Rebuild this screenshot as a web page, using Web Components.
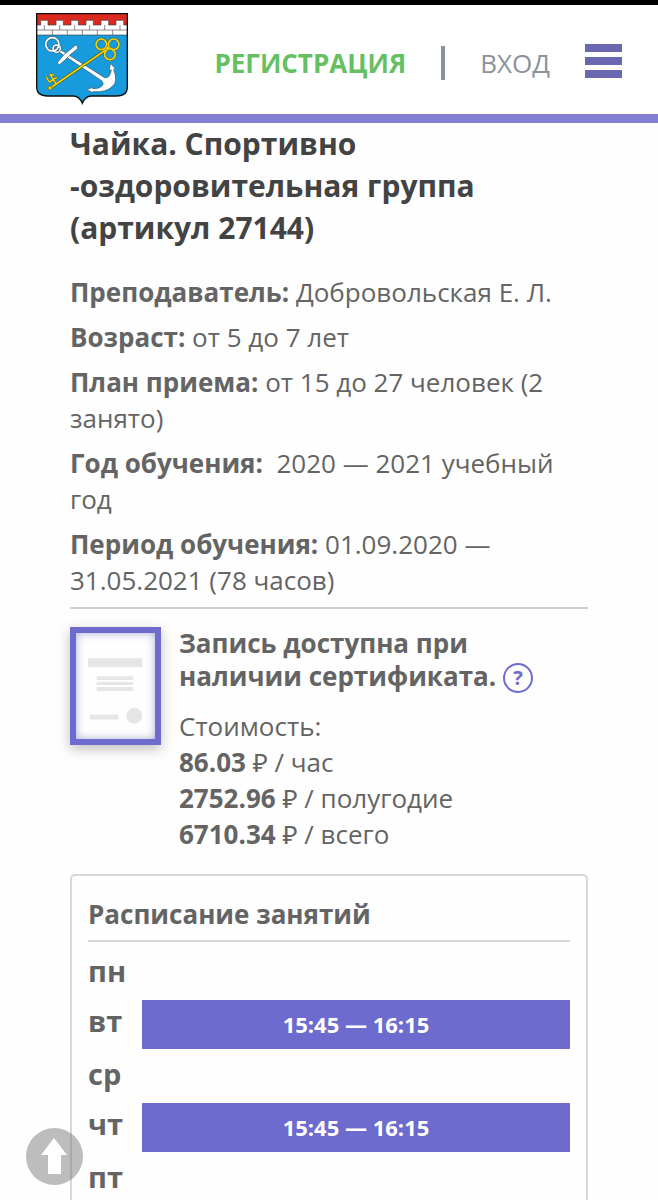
<!DOCTYPE html>
<html lang="ru">
<head>
<meta charset="utf-8">
<meta name="viewport" content="width=device-width, initial-scale=1">
<title>Чайка. Спортивно-оздоровительная группа</title>
<style>
  html, body {
    height: 100%;
    margin: 0;
    overflow: hidden;
  }
  body {
    display: flex;
    flex-direction: column;
    background: #fefefe;
    color: #646464;
    font: 26px/36px "Open Sans", "Noto Sans", sans-serif;
  }
</style>
</head>
<body>
  <site-header></site-header>
  <course-page>
    <span slot="title">Чайка. Спортивно <br>-оздоровительная группа (артикул 27144)</span>
    <course-field label="Преподаватель:">Добровольская Е. Л.</course-field>
    <course-field label="Возраст:">от 5 до 7 лет</course-field>
    <course-field label="План приема:">от 15 до 27 человек (2 занято)</course-field>
    <course-field label="Год обучения:">&nbsp;2020 — 2021 учебный год</course-field>
    <course-field label="Период обучения:">01.09.2020 — 31.05.2021 (78 часов)</course-field>
    <certificate-info slot="certificate">
      <span slot="note">Запись доступна при наличии сертификата.</span>
      <price-line value="86.03">час</price-line>
      <price-line value="2752.96">полугодие</price-line>
      <price-line value="6710.34">всего</price-line>
    </certificate-info>
    <course-schedule slot="schedule" titulo="Расписание занятий" days="пн,вт=15:45 — 16:15,ср,чт=15:45 — 16:15,пт"></course-schedule>
  </course-page>
  <scroll-top></scroll-top>

<script>
class SiteCrest extends HTMLElement {
  constructor() {
    super();
    const shadow = this.attachShadow({mode: "open"});
    shadow.innerHTML = `
      <style>
        :host { display: block; width: 92px; height: 92px; }
        svg { display: block; width: 100%; height: 100%; }
      </style>
      <svg viewBox="108 40 276 276" role="img" aria-label="Герб">
        <defs>
          <clipPath id="shield"><path d="M111 42H382V262Q382 289 350 289H274Q256 289 247 311Q238 289 220 289H143Q111 289 111 262Z"/></clipPath>
        </defs>
        <g clip-path="url(#shield)">
          <path fill="#179bdc" d="M108 40h276v276H108z"/>
          <path fill="#dc291e" d="M108 40h276v40H108z"/>
          <path fill="#fff" stroke="#444" stroke-width="2" d="M108 76H122V62H144V76H168V62H190V76H213V62H235V76H258V62H280V76H303V62H326V76H348V62H371V76H386V106H108Z"/>
          <path fill="none" stroke="#555" stroke-width="2" d="M108 91H386M133 76V91M179 76V91M224 76V91M269 76V91M314 76V91M360 76V91M157 91V106M202 91V106M247 91V106M292 91V106M338 91V106"/>
        </g>
        <g fill="none" stroke="#35576b" stroke-width="8">
          <circle cx="157" cy="134" r="20"/>
          <circle cx="170" cy="147" r="11"/>
        </g>
        <g fill="none" stroke="#fff" stroke-width="5">
          <circle cx="157" cy="134" r="20"/>
          <circle cx="170" cy="147" r="11"/>
        </g>
        <g fill="#fff" stroke="#35576b" stroke-width="2" stroke-linejoin="round">
          <path d="M178 158L183 151L314 234Q329 238 334 211L328 214L331 191L346 207L341 209Q355 247 337 260Q319 279 279 276L281 280L260 270L280 262L278 267Q304 268 310 252L305 243Z"/>
          <path d="M171 190L193 164L214 147L226 137L233 139L232 148L213 163L193 183L178 195Z"/>
        </g>
        <g stroke-linecap="round" fill="none">
          <g stroke="#5c5c20" stroke-width="9">
            <path d="M151 265L324 146"/>
            <path stroke-width="7" d="M168 252L150 224M150 224L160 226M159 239L170 234M142 239L150 247L159 239M142 239L140 232"/>
          </g>
          <g stroke="#5c5c20" stroke-width="8">
            <circle cx="304" cy="134" r="16"/><circle cx="341" cy="134" r="16"/><circle cx="330" cy="164" r="16"/>
          </g>
          <g stroke="#f2d60c" stroke-width="5">
            <path d="M151 265L324 146"/>
            <path stroke-width="4" d="M168 252L150 224M150 224L160 226M159 239L170 234M142 239L150 247L159 239M142 239L140 232"/>
            <circle cx="304" cy="134" r="16"/><circle cx="341" cy="134" r="16"/><circle cx="330" cy="164" r="16"/>
          </g>
        </g>
        <circle cx="323" cy="146" r="6" fill="#f2d60c" stroke="#5c5c20"/>
        <circle cx="150" cy="265" r="6" fill="#f2d60c" stroke="#5c5c20" stroke-width="2"/>
        <path fill="none" stroke="#111" stroke-width="4" d="M110 42H382V262Q382 289 350 289H274Q256 289 247 311Q238 289 220 289H143Q110 289 110 262Z"/>
      </svg>
    `;
  }
}
customElements.define("site-crest", SiteCrest);

class SiteHeader extends HTMLElement {
  constructor() {
    super();
    const shadow = this.attachShadow({mode: "open"});
    shadow.innerHTML = `
      <style>
        :host {
          display: block;
          flex: none;
          border-top: 5px solid #000;
          border-bottom: 9px solid #8380d3;
          background: #fff;
        }
        header {
          display: flex;
          align-items: center;
          justify-content: space-between;
          padding: 8px 36px 9px;
        }
        nav, .links {
          display: flex;
          align-items: center;
          gap: 35px;
          padding-top: 4px;
        }
        a { color: #8b929c; text-decoration: none; }
        .register { color: #66bf62; font-weight: 700; }
        .line { width: 4px; height: 34px; background: #8b929c; }
        button {
          display: flex;
          flex-direction: column;
          gap: 5px;
          width: 37px;
          padding: 0;
          border: 0;
          background: none;
        }
        i { width: 100%; height: 8px; background: #6a68b1; }
      </style>
      <header>
        <site-crest></site-crest>
        <nav>
          <div class="links">
            <a class="register" href="#">РЕГИСТРАЦИЯ</a>
            <span class="line"></span>
            <a href="#">ВХОД</a>
          </div>
          <button type="button" aria-label="Меню"><i></i><i></i><i></i></button>
        </nav>
      </header>
    `;
  }
}
customElements.define("site-header", SiteHeader);

class CoursePage extends HTMLElement {
  constructor() {
    super();
    const shadow = this.attachShadow({mode: "open"});
    shadow.innerHTML = `
      <style>
        :host {
          display: flex;
          flex-direction: column;
          flex: 1;
          min-height: 0;
          padding: 0 70px;
        }
        h1 {
          margin: 0 0 25px;
          color: #434343;
          font-size: 30px;
          line-height: 42px;
        }
        .fields {
          display: flex;
          flex-direction: column;
          gap: 9px;
          padding-bottom: 9px;
          border-bottom: 2px solid #d0d0d4;
        }
        ::slotted(certificate-info) { margin: 18px 0 22px; }
      </style>
      <h1><slot name="title"></slot></h1>
      <div class="fields"><slot></slot></div>
      <slot name="certificate"></slot>
      <slot name="schedule"></slot>
    `;
  }
}
customElements.define("course-page", CoursePage);

class CourseField extends HTMLElement {
  constructor() {
    super();
    const shadow = this.attachShadow({mode: "open"});
    shadow.innerHTML = `
      <style>
        :host { display: block; }
      </style>
      <b>${this.getAttribute("label")}</b> <slot></slot>
    `;
  }
}
customElements.define("course-field", CourseField);

class PriceLine extends HTMLElement {
  constructor() {
    super();
    const shadow = this.attachShadow({mode: "open"});
    shadow.innerHTML = `
      <style>
        :host { display: block; }
      </style>
      <b>${this.getAttribute("value")}</b> ₽ / <slot></slot>
    `;
  }
}
customElements.define("price-line", PriceLine);

class CertificateInfo extends HTMLElement {
  constructor() {
    super();
    const shadow = this.attachShadow({mode: "open"});
    shadow.innerHTML = `
      <style>
        :host {
          display: flex;
          align-items: flex-start;
          gap: 18px;
          flex: none;
        }
        .paper {
          flex: none;
          box-sizing: border-box;
          width: 91px;
          height: 118px;
          border: 6px solid #6d6bce;
          box-shadow: 0 4px 12px rgba(0, 0, 0, 0.25), inset 0 0 8px rgba(90, 88, 180, 0.5);
        }
        svg { display: block; width: 100%; height: 100%; }
        p {
          margin: 0 0 15px;
          max-width: 360px;
          font-weight: 700;
          line-height: 33px;
        }
        button {
          width: 30px;
          height: 30px;
          padding: 0;
          border: 2px solid #6d6bce;
          border-radius: 50%;
          background: none;
          color: #6d6bce;
          font: 700 20px/26px "Open Sans", "Noto Sans", sans-serif;
          vertical-align: bottom;
        }
      </style>
      <div class="paper">
        <svg viewBox="0 0 80 106" fill="#e6e6e6">
          <path d="M12 25h55v9H12zM21 43h37v4H21zM21 49h37v3H21zM21 54h37v4H21zM14 82h29v5H14z"/>
          <circle cx="59" cy="83" r="8"/>
        </svg>
      </div>
      <div>
        <p><slot name="note"></slot> <button type="button" aria-label="Подсказка">?</button></p>
        Стоимость:
        <slot></slot>
      </div>
    `;
  }
}
customElements.define("certificate-info", CertificateInfo);

class CourseSchedule extends HTMLElement {
  constructor() {
    super();
    const shadow = this.attachShadow({mode: "open"});
    // "day=time" has a lesson, a plain "day" is empty
    const rows = this.getAttribute("days").split(",").map(item => {
      const [day, time] = item.split("=");
      return time
        ? `<tr class="busy"><th scope="row">${day}</th><td>${time}</td></tr>`
        : `<tr><th scope="row">${day}</th><td></td></tr>`;
    });
    shadow.innerHTML = `
      <style>
        :host {
          display: block;
          flex: 1 0 0;
          min-height: 0;
          overflow: hidden;
          padding: 20px 16px 0;
          border: 2px solid #d8d8d8;
          border-bottom: 0;
          border-radius: 5px 5px 0 0;
        }
        h2 {
          margin: 0 0 4px;
          padding-bottom: 8px;
          border-bottom: 2px solid #d8d8d8;
          font-size: 26px;
          line-height: 36px;
        }
        table {
          width: 100%;
          border-collapse: collapse;
        }
        tr { height: 54px; }
        .busy { height: 49px; }
        th {
          width: 54px;
          padding: 4px 0 0;
          font-size: 29px;
          line-height: 42px;
          text-align: left;
          vertical-align: top;
        }
        .busy th { padding: 0; }
        td { padding: 0; }
        .busy td {
          padding-bottom: 2px;
          background: #6d6bce;
          color: #fff;
          font-size: 22px;
          font-weight: 700;
          text-align: center;
        }
      </style>
      <h2>${this.getAttribute("titulo")}</h2>
      <table>${rows.join("")}</table>
    `;
  }
}
customElements.define("course-schedule", CourseSchedule);

class ScrollTop extends HTMLElement {
  constructor() {
    super();
    const shadow = this.attachShadow({mode: "open"});
    shadow.innerHTML = `
      <style>
        :host {
          display: block;
          position: fixed;
          left: 26px;
          bottom: 15px;
        }
        button {
          display: block;
          width: 57px;
          height: 57px;
          padding: 0;
          border: 0;
          border-radius: 50%;
          background: rgba(120, 120, 120, 0.48);
        }
        svg { display: block; width: 100%; height: 100%; }
      </style>
      <button type="button" aria-label="Наверх">
        <svg viewBox="0 0 57 57"><path fill="#fff" d="M28 10L41 27H35V46H22V27H15Z"/></svg>
      </button>
    `;
  }
}
customElements.define("scroll-top", ScrollTop);
</script>
</body>
</html>
